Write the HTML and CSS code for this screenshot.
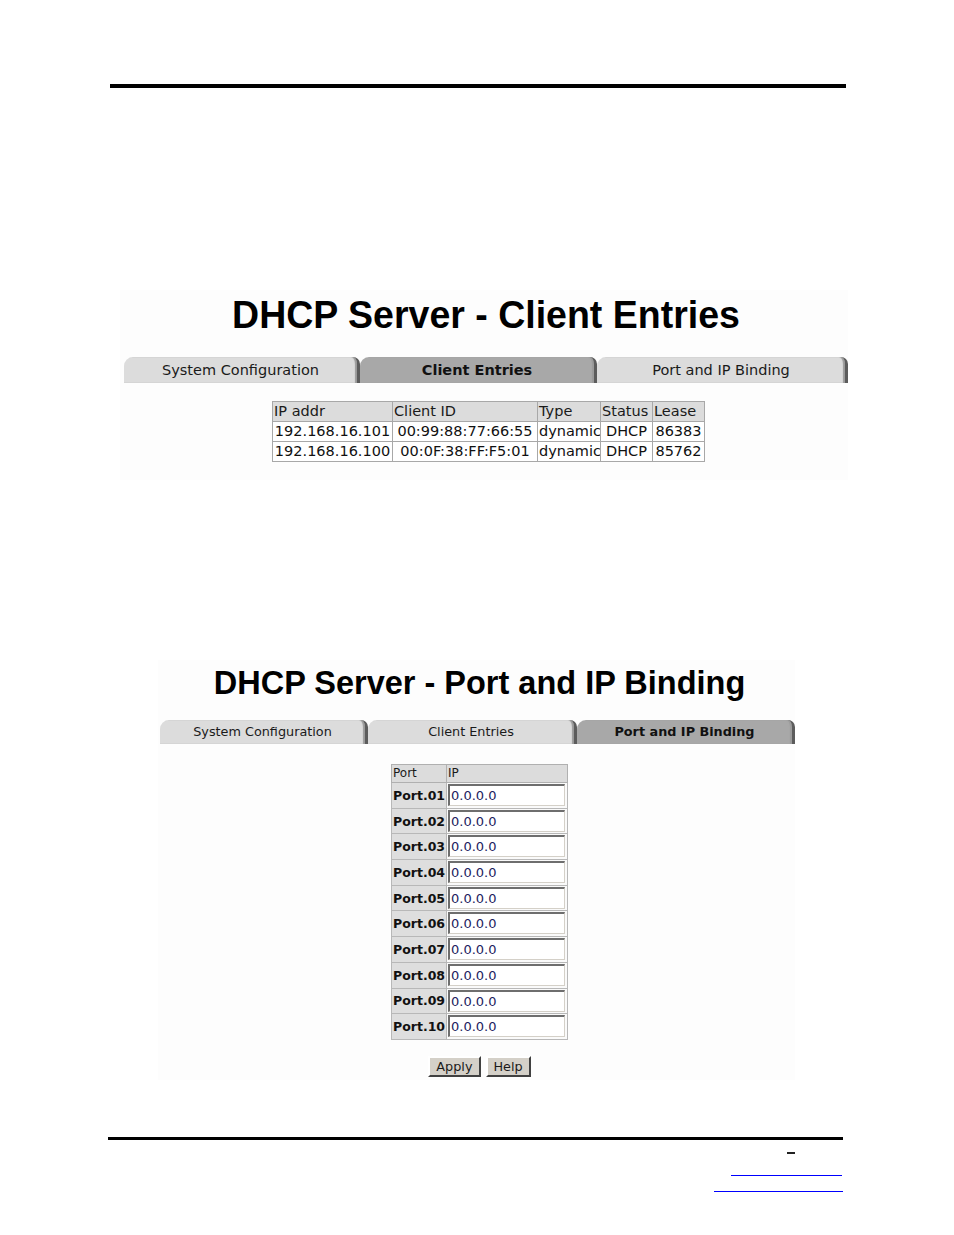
FILE: index.html
```html
<!DOCTYPE html>
<html>
<head>
<meta charset="utf-8">
<link rel="stylesheet" href="styles.css">
</head>
<body>
<div class="page">
  <div class="rule-top"></div>

  <div class="shot shot1">
    <div class="title-wrap t1"><h1 class="title">DHCP Server - Client Entries</h1></div>
    <div class="tabs tabs1">
      <div class="tab w1">System Configuration</div>
      <div class="tab active w2">Client Entries</div>
      <div class="tab w3">Port and IP Binding</div>
    </div>
    <div class="content1">
      <table class="entries">
        <colgroup>
          <col class="c1"><col class="c2"><col class="c3"><col class="c4"><col class="c5">
        </colgroup>
        <tr><th>IP addr</th><th>Client ID</th><th>Type</th><th>Status</th><th>Lease</th></tr>
        <tr><td>192.168.16.101</td><td>00:99:88:77:66:55</td><td>dynamic</td><td>DHCP</td><td>86383</td></tr>
        <tr><td>192.168.16.100</td><td>00:0F:38:FF:F5:01</td><td>dynamic</td><td>DHCP</td><td>85762</td></tr>
      </table>
    </div>
  </div>

  <div class="shot shot2">
    <div class="title-wrap t2"><h1 class="title title2">DHCP Server - Port and IP Binding</h1></div>
    <div class="tabs tabs2">
      <div class="tab v1">System Configuration</div>
      <div class="tab v2">Client Entries</div>
      <div class="tab active v3">Port and IP Binding</div>
    </div>
    <div class="content2">
      <div class="binding-box">
        <table class="binding">
          <tr><th class="pc">Port</th><th class="ic">IP</th></tr>
          <tr><td class="lbl">Port.01</td><td class="inp"><input type="text" value="0.0.0.0"></td></tr>
          <tr><td class="lbl">Port.02</td><td class="inp"><input type="text" value="0.0.0.0"></td></tr>
          <tr><td class="lbl">Port.03</td><td class="inp"><input type="text" value="0.0.0.0"></td></tr>
          <tr><td class="lbl">Port.04</td><td class="inp"><input type="text" value="0.0.0.0"></td></tr>
          <tr><td class="lbl">Port.05</td><td class="inp"><input type="text" value="0.0.0.0"></td></tr>
          <tr><td class="lbl">Port.06</td><td class="inp"><input type="text" value="0.0.0.0"></td></tr>
          <tr><td class="lbl">Port.07</td><td class="inp"><input type="text" value="0.0.0.0"></td></tr>
          <tr><td class="lbl">Port.08</td><td class="inp"><input type="text" value="0.0.0.0"></td></tr>
          <tr><td class="lbl">Port.09</td><td class="inp"><input type="text" value="0.0.0.0"></td></tr>
          <tr><td class="lbl">Port.10</td><td class="inp"><input type="text" value="0.0.0.0"></td></tr>
        </table>
        <div class="buttons">
          <button class="btn">Apply</button>
          <button class="btn">Help</button>
        </div>
      </div>
    </div>
  </div>

  <div class="rule-bottom"></div>
  <div class="footer">
    <div class="dash"></div>
    <div class="link-line l1"></div>
    <div class="link-line l2"></div>
  </div>
</div>
</body>
</html>
```

FILE: styles.css
```css
html, body {
  margin: 0;
  padding: 0;
  background: #ffffff;
}
body {
  font-family: "DejaVu Sans", Verdana, sans-serif;
  color: #000;
}
.page {
  width: 954px;
  padding-top: 84px;
}
.rule-top {
  margin-left: 110px;
  width: 736px;
  height: 4px;
  background: #000;
}

.shot {
  background: #fdfdfd;
}
.shot1 {
  margin-top: 202px;
  margin-left: 120px;
  width: 728px;
  height: 190px;
}
.shot2 {
  margin-top: 180px;
  margin-left: 158px;
  width: 637px;
  height: 420px;
}

.title-wrap {
  box-sizing: border-box;
  text-align: center;
}
.t1 {
  height: 67px;
  padding-top: 6px;
  padding-left: 4px;
}
.t2 {
  height: 60px;
  padding-top: 6px;
  padding-left: 6px;
}
.title {
  margin: 0;
  font-family: "Liberation Sans", Arial, sans-serif;
  font-weight: bold;
  font-size: 37.5px;
  line-height: 37.5px;
  color: #000;
  transform: scaleY(1.05);
}
.title2 {
  font-size: 32.5px;
  line-height: 32.5px;
}

.tabs {
  display: flex;
}
.tabs1 {
  margin-left: 4px;
  height: 26px;
}
.tabs2 {
  margin-left: 2px;
  height: 24px;
}
.tab {
  box-sizing: border-box;
  background: #dcdcdc;
  color: #1a1a1a;
  text-align: center;
  border-top-left-radius: 9px;
  border-top-right-radius: 7px;
  border-right: 3px solid #5c5c5c;
  box-shadow: inset -2px 0 1px #9a9a9a;
}
.tab.active {
  background: #a8a8a8;
  font-weight: bold;
  color: #111;
}
.tabs1 .tab {
  font-size: 14.5px;
  line-height: 26px;
}
.tabs2 .tab {
  font-size: 12.8px;
  line-height: 24px;
}
.w1 { width: 236px; }
.w2 { width: 237px; }
.w3 { width: 251px; }
.v1 { width: 208px; }
.v2 { width: 209px; }
.v3 { width: 218px; }

.content1 {
  padding-top: 18px;
  padding-left: 152px;
}
.entries {
  border-collapse: collapse;
  table-layout: fixed;
  width: 432px;
  font-size: 14.5px;
}
.c1 { width: 120px; }
.c2 { width: 145px; }
.c3 { width: 63px; }
.c4 { width: 52px; }
.c5 { width: 52px; }
.entries th, .entries td {
  border: 1px solid #a8a8a8;
  height: 19px;
  line-height: 19px;
  padding: 0 1px;
  white-space: nowrap;
  overflow: hidden;
}
.entries th {
  background: #dcdcdc;
  font-weight: normal;
  text-align: left;
  color: #1a1a1a;
}
.entries td {
  background: #ffffff;
  text-align: center;
  color: #111;
}

.content2 {
  padding-top: 20px;
  padding-left: 233px;
}
.binding-box {
  display: inline-flex;
  flex-direction: column;
  align-items: center;
}
.binding {
  border-collapse: collapse;
  width: 176px;
}
.binding th {
  background: #dcdcdc;
  font-weight: normal;
  font-size: 12px;
  line-height: 17px;
  text-align: left;
  padding: 0 1px;
  border: 1px solid #b0b0b0;
  color: #1a1a1a;
}
.binding .pc { width: 52px; }
.binding td {
  border: 1px solid #b8b8b8;
}
.binding .lbl {
  background: #dedede;
  font-weight: bold;
  font-size: 12.5px;
  padding: 0 1px;
  white-space: nowrap;
  color: #111;
}
.binding .inp {
  background: #fafafa;
  padding: 1px 2px 1.7px 1px;
}
.binding input {
  display: block;
  box-sizing: border-box;
  width: 117px;
  height: 22px;
  margin: 0;
  padding: 0 1px;
  font-family: "DejaVu Sans", Verdana, sans-serif;
  font-size: 13px;
  color: #1c1c5e;
  background: #ffffff;
  border-top: 2px solid #6e6e6e;
  border-left: 2px solid #6e6e6e;
  border-bottom: 1px solid #d4d0c8;
  border-right: 1px solid #d4d0c8;
  outline: none;
}

.buttons {
  display: flex;
  gap: 5px;
  margin-top: 16px;
}
.btn {
  box-sizing: border-box;
  height: 21px;
  margin: 0;
  padding: 0 6px;
  font-family: "DejaVu Sans", Verdana, sans-serif;
  font-size: 12.8px;
  line-height: 17px;
  color: #1a1a1a;
  background: #d4d0c8;
  border-top: 2px solid #ffffff;
  border-left: 2px solid #ffffff;
  border-bottom: 2px solid #404040;
  border-right: 2px solid #404040;
}

.rule-bottom {
  margin-top: 57px;
  margin-left: 108px;
  width: 735px;
  height: 3px;
  background: #000;
}
.footer {
  height: 60px;
}
.dash {
  margin-top: 12px;
  margin-left: 787px;
  width: 8px;
  height: 2px;
  background: #222;
}
.link-line {
  height: 0;
  border-top: 1px solid #0000ff;
}
.l1 {
  margin-top: 21px;
  margin-left: 731px;
  width: 111px;
}
.l2 {
  margin-top: 15px;
  margin-left: 714px;
  width: 129px;
}
```
